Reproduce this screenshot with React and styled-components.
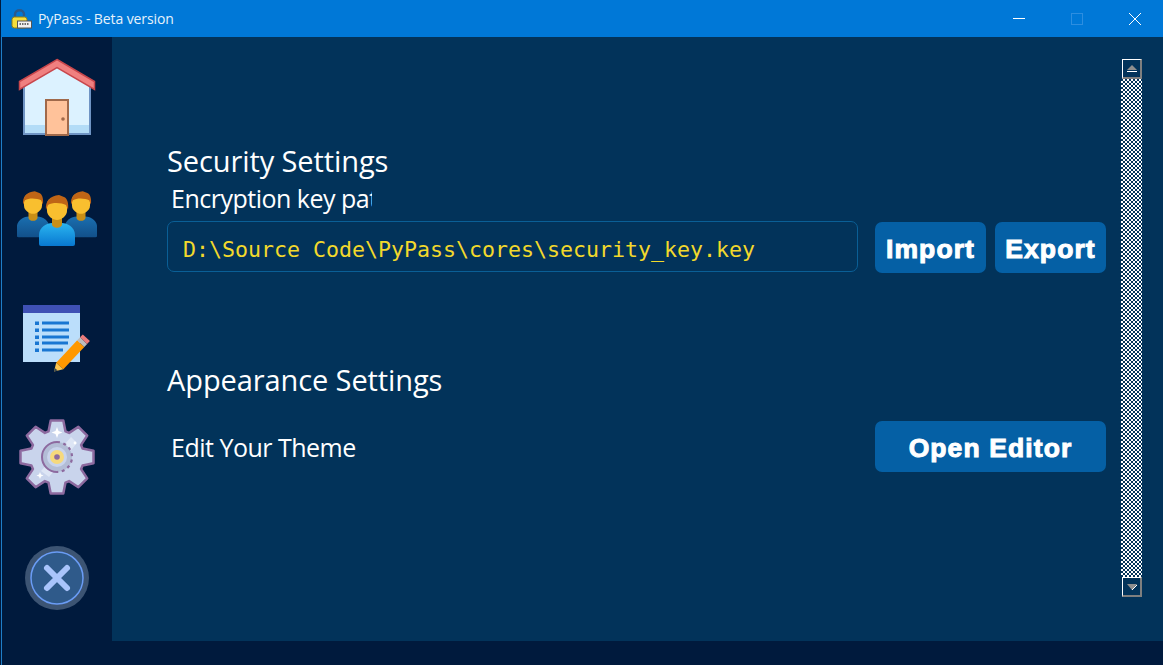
import React from "react"
import styled, { createGlobalStyle } from "styled-components"

const GlobalStyle = createGlobalStyle`
  html, body {
    margin: 0;
    padding: 0;
    background: #001a3d;
    overflow: hidden;
  }
`

const Window = styled.div`
  width: 1163px;
  height: 665px;
  display: flex;
  flex-direction: column;
  background: #001a3d;
  box-sizing: border-box;
  padding-left: 1px;
  font-family: "Open Sans", "Noto Sans", sans-serif;
`
const TitleBar = styled.div`
  height: 37px;
  background: #0078d7;
  display: flex;
  align-items: center;
  padding-left: 10px;
  color: #e6f2fb;
  font-size: 14px;
  flex-shrink: 0;
`
const TitleText = styled.span`
  margin-left: 6px;
  flex: 1;
  letter-spacing: -0.1px;
`
const WinControls = styled.div`
  display: flex;
  height: 100%;
  margin-right: -1px;
`
const WinButton = styled.div`
  width: 58px;
  display: flex;
  align-items: center;
  justify-content: center;
`
const Body = styled.div`
  flex: 1;
  display: flex;
  min-height: 0;
  border-left: 1px solid #1f7fc9;
`
const Sidebar = styled.nav`
  width: 110px;
  flex-shrink: 0;
  display: flex;
  flex-direction: column;
  align-items: center;
  gap: 40px;
  padding-top: 20px;
  box-sizing: border-box;
`
const NavIcon = styled.svg`
  width: 80px;
  height: 80px;
  display: block;
`
const Main = styled.main`
  flex: 1;
  margin-bottom: 24px;
  background: #02335a;
  display: flex;
  padding: 22px 21px 44px 55px;
  min-width: 0;
`
const Content = styled.div`
  flex: 1;
  padding: 83px 15px 0 0;
  min-width: 0;
  display: flex;
  flex-direction: column;
`
const Heading = styled.h2`
  margin: 0;
  font-size: 29px;
  line-height: 38px;
  font-weight: 400;
  color: #fff;
  letter-spacing: -0.1px;
`
const Label = styled.div`
  width: ${(p) => p.$width || "auto"};
  margin-left: 4px;
  font-size: 25px;
  line-height: 36px;
  color: #fff;
  white-space: nowrap;
  overflow: hidden;
  letter-spacing: -0.5px;
`
const Row = styled.div`
  display: flex;
  align-items: ${(p) => p.$align || "center"};
  gap: 9px;
  margin-top: ${(p) => p.$top || 0}px;
  margin-bottom: ${(p) => p.$bottom || 0}px;
`
const PathBox = styled.div`
  flex: 1;
  height: 51px;
  box-sizing: border-box;
  margin: 0 8px 1px 0;
  border: 1px solid #0a5f96;
  border-radius: 7px;
  display: flex;
  align-items: center;
  padding: 5px 0 0 15px;
  font-family: "DejaVu Sans Mono", monospace;
  font-size: 21.6px;
  color: #f2d92c;
  white-space: nowrap;
`
const Spacer = styled.div`
  flex: 1;
`
const Button = styled.button`
  width: ${(p) => p.$width}px;
  height: 51px;
  border: none;
  border-radius: 7px;
  background: #0560a5;
  color: #fff;
  font-family: "Liberation Sans", Arial, sans-serif;
  font-weight: 700;
  font-size: 26.5px;
  letter-spacing: 1.1px;
  -webkit-text-stroke: 1px #fff;
  padding: 4px 0 0;
`
const ScrollBar = styled.div`
  width: 21px;
  flex-shrink: 0;
  display: flex;
  flex-direction: column;
`
const ScrollButton = styled.div`
  height: ${(p) => p.$height}px;
  box-sizing: border-box;
  margin-left: 1px;
  border: 1px solid;
  border-width: 1px 2px 2px 1px;
  border-color: #fff #7f7f7f #7f7f7f #fff;
  background: #02335a;
  display: flex;
  align-items: center;
  justify-content: center;
`
const ScrollTrack = styled.div`
  flex: 1;
  background: repeating-conic-gradient(#fff 0 25%, #02335a 0 50%) 0 0 / 4px 4px;
`

function LockIcon() {
  return (
    <svg width="21" height="20" viewBox="0 0 21 20">
      <path d="M4 9V5.500C4 2.800 6 1.200 8.500 1.200S13 2.800 13 5.500V7" fill="none" stroke="#2b5a8c" strokeWidth="2.400" />
      <rect x="1" y="8" width="15" height="11" rx="2.500" fill="#f6de3c" stroke="#8f7d14" strokeWidth="1" />
      <rect x="6.500" y="12" width="14" height="7" fill="#f2f2f2" stroke="#555" strokeWidth="1" />
      <path d="M8.500 15h10" stroke="#444" strokeWidth="1.600" strokeDasharray="1.500 1" />
    </svg>
  )
}

function HomeIcon() {
  return (
    <NavIcon viewBox="0 0 80 80">
      <path d="M7 26L40 7L73 26V77H7Z" fill="#dcf2ff" />
      <rect x="7" y="68" width="66" height="9" fill="#b3dcf7" />
      <path d="M7 28V77H73V28" stroke="#6f94c4" strokeWidth="2" fill="none" />
      <path d="M40 2.500L77.500 24.500V32.500L40 10.500L2.500 32.500V24.500Z" fill="#f08080" stroke="#c8474c" strokeWidth="1.500" />
      <rect x="29" y="43" width="22" height="35" fill="#ffc29a" stroke="#a0694a" strokeWidth="2" />
      <circle cx="46" cy="62" r="1.800" fill="#a0694a" />
    </NavIcon>
  )
}

function Person({ x, y, scale, shirtA, shirtB, id }) {
  return (
    <g transform={`translate(${x} ${y}) scale(${scale})`}>
      <defs>
        <linearGradient id={id} x1="0" y1="0" x2="0" y2="1">
          <stop offset="0" stopColor={shirtA} />
          <stop offset="1" stopColor={shirtB} />
        </linearGradient>
      </defs>
      <path d="M-18 21Q-18 23 -16 23H16Q18 23 18 21V12C18 4 10 0 5 0H-5C-10 0 -18 4 -18 12Z" fill={`url(#${id})`} />
      <path d="M-5 -6H5V1C5 6 -5 6 -5 1Z" fill="#c98f16" />
      <path d="M-10 -18C-10 -24 -5 -26 0 -26C5 -26 10 -24 10 -18V-12C10 -7 4 -3 0 -3C-4 -3 -10 -7 -10 -12Z" fill="#f9bf2f" />
      <path d="M-11 -13C-12 -22 -7 -27 2 -28L7 -26C10 -25 12 -20 11 -13L9 -18C5 -20 -4 -21 -9 -18Z" fill="#bf6516" />
    </g>
  )
}

function PeopleIcon() {
  return (
    <NavIcon viewBox="0 0 80 80">
      <Person id="shirtLeft" x="16" y="39.500" scale="0.9" shirtA="#1a6fb0" shirtB="#12508a" />
      <Person id="shirtRight" x="64" y="39.500" scale="0.9" shirtA="#1a6fb0" shirtB="#12508a" />
      <Person id="shirtMid" x="40" y="46" scale="1" shirtA="#2bb5f0" shirtB="#0878d0" />
    </NavIcon>
  )
}

function NotesIcon() {
  const lines = [26, 33, 40, 46, 53]
  return (
    <NavIcon viewBox="0 0 80 80">
      <path d="M6 8H63V65H6Z" fill="#bbdefb" />
      <rect x="6" y="8" width="57" height="8" fill="#3f51b5" />
      {lines.map((y, i) => (
        <g key={y} fill="#1976d2">
          <rect x="18" y={y - 1.500} width="4" height="3.500" />
          <rect x="25" y={y - 1.500} width={i === 4 ? 21 : i === 3 ? 26 : 27} height="3" />
        </g>
      ))}
      <path d="M60.200 43.300L67.300 49.900L46.300 72.300L39.200 65.700Z" fill="#ff9800" />
      <path d="M63 40.300L70.100 46.900L67.300 49.900L60.200 43.300Z" fill="#bdbdbd" />
      <path d="M65.800 37.400L72.900 44L70.100 46.900L63 40.300Z" fill="#ec7b7b" />
      <path d="M39.200 65.700L46.300 72.300L37 74.500Z" fill="#ffc64d" />
      <path d="M37 74.500L37.800 71L40.700 73.600Z" fill="#37474f" />
    </NavIcon>
  )
}

// eight teeth round the centre, computed instead of typing out 32 points
function gearPath(cx, cy, outer, inner) {
  const pts = []
  for (let i = 0; i < 8; i++) {
    const a = (i * Math.PI) / 4 - Math.PI / 2
    const spread = [[-0.32, inner], [-0.17, outer], [0.17, outer], [0.32, inner]]
    spread.forEach(([d, r]) => {
      pts.push(`${(cx + r * Math.cos(a + d)).toFixed(1)} ${(cy + r * Math.sin(a + d)).toFixed(1)}`)
    })
  }
  return `M${pts.join("L")}Z`
}

function GearIcon() {
  return (
    <NavIcon viewBox="0 0 80 80">
      <path d={gearPath(40, 40, 37, 27)} fill="#c9d4ec" stroke="#8d6a9f" strokeWidth="2.500" strokeLinejoin="round" />
      <path d="M54 20L60 26L32 60L24 54Z" fill="#dde5f5" />
      <circle cx="40" cy="40" r="15" fill="#b3bdd6" />
      <circle cx="40" cy="40" r="10" fill="#c9d4ec" />
      <path d="M40 25A15 15 0 0 0 40 55" fill="none" stroke="#8d6a9f" strokeWidth="2" />
      <path d="M40 25A15 15 0 0 1 40 55" fill="none" stroke="#8d6a9f" strokeWidth="2.200" strokeDasharray="3 3.500" />
      <circle cx="40" cy="40" r="7" fill="#f6d97c" />
      <circle cx="40" cy="40" r="2.800" fill="#8d6a9f" />
      <path d="M40 10L41.500 14L45.500 15.500L41.500 17L40 21L38.500 17L34.500 15.500L38.500 14Z" fill="#fff" />
      <path d="M23 55L24 57.500L26.500 58.500L24 59.500L23 62L22 59.500L19.500 58.500L22 57.500Z" fill="#fff" />
      <circle cx="58" cy="26" r="1.400" fill="#fff" />
    </NavIcon>
  )
}

function CloseIcon() {
  return (
    <NavIcon viewBox="0 0 80 80">
      <circle cx="40" cy="41" r="32" fill="#3c5473" />
      <circle cx="40" cy="41" r="26" fill="#2f5a8a" stroke="#6a9cf5" strokeWidth="1.500" />
      <path d="M30 31L50 51M50 31L30 51" stroke="#a9c4fb" strokeWidth="6" strokeLinecap="round" />
    </NavIcon>
  )
}

export default function App() {
  return (
    <Window>
      <GlobalStyle />
      <TitleBar>
        <LockIcon />
        <TitleText>PyPass - Beta version</TitleText>
        <WinControls>
          <WinButton>
            <svg width="12" height="12" viewBox="0 0 12 12">
              <path d="M0 5.500H12" stroke="#fff" strokeWidth="1" />
            </svg>
          </WinButton>
          <WinButton>
            <svg width="12" height="12" viewBox="0 0 12 12">
              <rect x="0.500" y="0.500" width="11" height="11" fill="none" stroke="#2d8ee0" strokeWidth="1" />
            </svg>
          </WinButton>
          <WinButton>
            <svg width="12" height="12" viewBox="0 0 12 12">
              <path d="M0 0L12 12M12 0L0 12" stroke="#fff" strokeWidth="1" />
            </svg>
          </WinButton>
        </WinControls>
      </TitleBar>
      <Body>
        <Sidebar>
          <HomeIcon />
          <PeopleIcon />
          <NotesIcon />
          <GearIcon />
          <CloseIcon />
        </Sidebar>
        <Main>
          <Content>
            <Heading>Security Settings</Heading>
            <Label $width="201px">Encryption key path</Label>
            <Row $align="flex-end" $top={5} $bottom={88}>
              <PathBox>D:\Source Code\PyPass\cores\security_key.key</PathBox>
              <Button $width={111}>Import</Button>
              <Button $width={111}>Export</Button>
            </Row>
            <Heading>Appearance Settings</Heading>
            <Row $top={22}>
              <Label>Edit Your Theme</Label>
              <Spacer />
              <Button $width={231}>Open Editor</Button>
            </Row>
          </Content>
          <ScrollBar>
            <ScrollButton $height={20}>
              <svg width="12" height="8" viewBox="0 0 12 8">
                <path d="M6 0L11 5H1Z" fill="#8f8f8f" />
                <path d="M1 6.500H11" stroke="#fff" strokeWidth="1" />
              </svg>
            </ScrollButton>
            <ScrollTrack />
            <ScrollButton $height={20}>
              <svg width="12" height="8" viewBox="0 0 12 8">
                <path d="M1 1H11L6 7Z" fill="#8f8f8f" />
                <path d="M6 7L11 2" stroke="#fff" strokeWidth="1" />
              </svg>
            </ScrollButton>
          </ScrollBar>
        </Main>
      </Body>
    </Window>
  )
}
